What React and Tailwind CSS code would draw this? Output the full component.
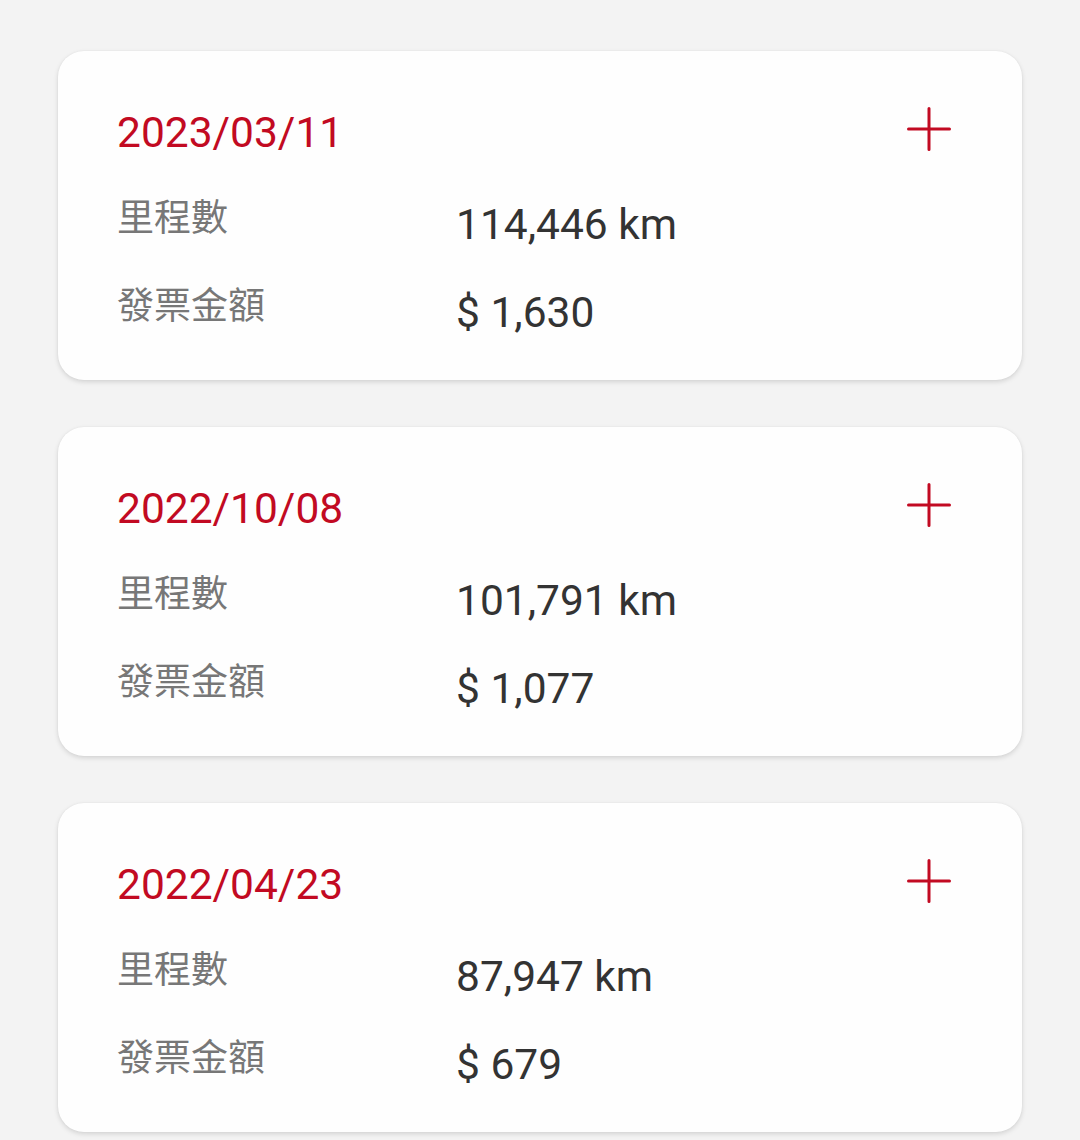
const records = [
  { date: "2023/03/11", mileage: "114,446 km", amount: "$ 1,630" },
  { date: "2022/10/08", mileage: "101,791 km", amount: "$ 1,077" },
  { date: "2022/04/23", mileage: "87,947 km", amount: "$ 679" },
];

const PlusIcon = () => (
  <svg width="44" height="44" viewBox="0 0 44 44" fill="none" className="shrink-0 mt-[-1px]">
    <path d="M22 1.5v41M1.5 22h41" stroke="#c20a22" strokeWidth="3" strokeLinecap="round" />
  </svg>
);

const Row = ({ label, value, className = "" }) => (
  <div className={`flex items-start ${className}`}>
    <span className="w-[339px] text-[37px] leading-[37px] text-[#777777]">{label}</span>
    <span className="text-[42.5px] leading-[49px] text-[#333333]">{value}</span>
  </div>
);

const RecordCard = ({ record }) => (
  <div className="h-[329px] rounded-[26px] bg-[#fefefe] pl-[59px] pr-[71px] pt-[57px] shadow-[0_2px_5px_rgba(0,0,0,0.13),0_0_2px_rgba(0,0,0,0.05)]">
    <div className="flex items-start justify-between">
      <span className="text-[42.5px] leading-[49px] text-[#c20a22]">{record.date}</span>
      <PlusIcon />
    </div>
    <Row className="mt-[43px]" label="里程數" value={record.mileage} />
    <Row className="mt-[39px]" label="發票金額" value={record.amount} />
  </div>
);

export default function App() {
  return (
    <div
      className="min-h-[1140px] bg-[#f3f3f3] px-[58px] pt-[51px]"
      style={{ fontFamily: 'Roboto, "Noto Sans CJK TC", sans-serif' }}
    >
      <div className="flex flex-col gap-[47px]">
        {records.map((r) => (
          <RecordCard key={r.date} record={r} />
        ))}
      </div>
    </div>
  );
}
